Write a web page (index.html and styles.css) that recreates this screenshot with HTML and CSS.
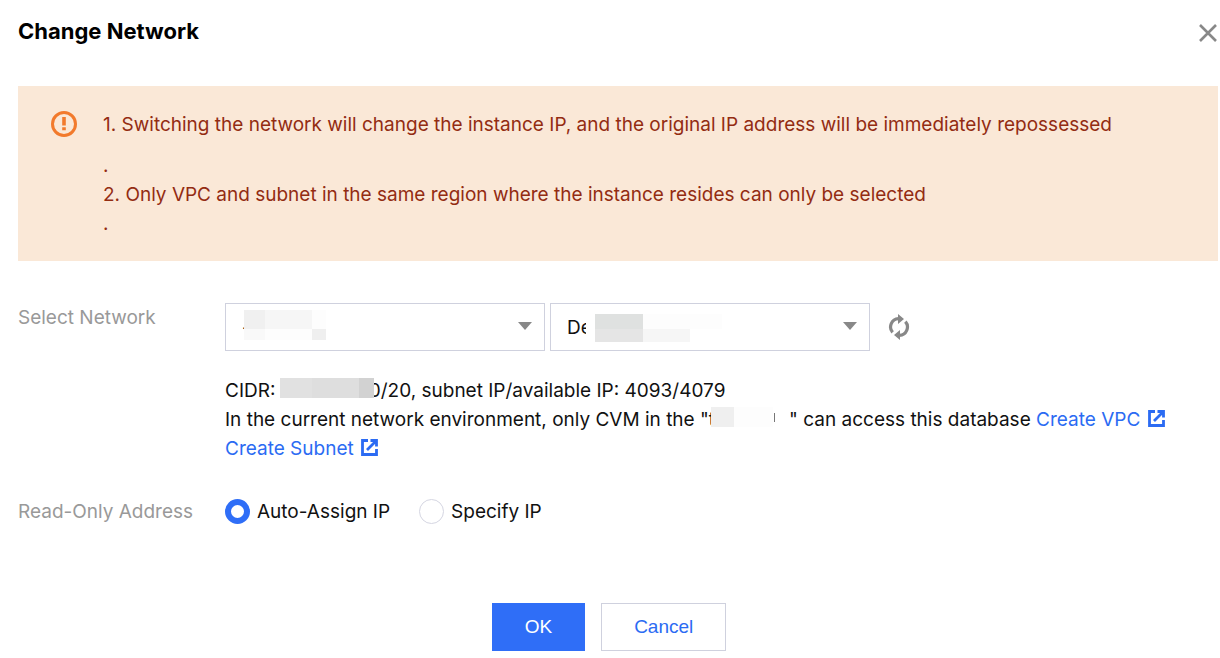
FILE: index.html
```html
<!DOCTYPE html>
<html lang="en">
<head>
    <meta charset="UTF-8">
    <meta name="viewport" content="width=device-width, initial-scale=1.0">
    <title>Change Network</title>
    <link rel="stylesheet" href="styles.css">
</head>
<body>
    <div class="dialog">
        <div class="dialog-header">
            <h2>Change Network</h2>
            <button type="button" class="icon-btn close-btn" aria-label="Close">
                <svg width="20" height="20" viewBox="0 0 20 20"><path d="M2 2l16 16M18 2L2 18" fill="none" stroke="#888" stroke-width="2.6"/></svg>
            </button>
        </div>

        <div class="alert">
            <svg class="alert-icon" width="26" height="26" viewBox="0 0 26 26">
                <circle cx="13" cy="13" r="11.5" fill="none" stroke="#f27a2c" stroke-width="3"/>
                <path d="M11.2 6h3.6v8.6h-3.6zM11.2 16.2h3.6v3h-3.6z" fill="#f27a2c"/>
            </svg>
            <div class="alert-text">
                <p>1. Switching the network will change the instance IP, and the original IP address will be immediately repossessed</p>
                <div>.</div>
                <div>2. Only VPC and subnet in the same region where the instance resides can only be selected</div>
                <div>.</div>
            </div>
        </div>

        <form>
            <div class="form-row">
                <label class="form-label" for="vpc">Select Network</label>
                <div class="form-content">
                    <div class="select-group">
                        <div class="select-box">
                            <select id="vpc"><option>-</option></select>
                            <span class="mask mask-vpc"></span>
                        </div>
                        <div class="select-box">
                            <select id="subnet" aria-label="Subnet"><option>De</option></select>
                            <span class="mask mask-subnet"></span>
                        </div>
                        <button type="button" class="icon-btn refresh-btn" aria-label="Refresh">
                            <svg width="22" height="26" viewBox="0 0 22 26">
                                <path d="M4.6 18.4A8.3 8.3 0 0 1 10.5 4.7M17.4 7.6A8.3 8.3 0 0 1 11.5 21.3" fill="none" stroke="#888" stroke-width="3.2"/>
                                <path d="M10 0l6 5-6 5zM12 16l-6 5 6 5z" fill="#888"/>
                            </svg>
                        </button>
                    </div>
                    <div class="network-info">
                        <div>CIDR: <span class="mask-inline mask-cidr"></span>0/20, subnet IP/available IP: 4093/4079</div>
                        <div>
                            In the current network environment, only CVM in the "t<span class="mask-inline mask-name"></span>" can access this database
                            <a href="#">Create VPC <svg class="link-icon" width="17" height="17" viewBox="0 0 17 17"><path d="M7 1.5H1.5v14h14V10M9.5 1.5h6v6M15 2L6 11" fill="none" stroke="currentColor" stroke-width="2.8"/></svg></a>
                            <a href="#">Create Subnet <svg class="link-icon" width="17" height="17" viewBox="0 0 17 17"><path d="M7 1.5H1.5v14h14V10M9.5 1.5h6v6M15 2L6 11" fill="none" stroke="currentColor" stroke-width="2.8"/></svg></a>
                        </div>
                    </div>
                </div>
            </div>

            <div class="form-row address-row">
                <span class="form-label" id="addressLabel">Read-Only Address</span>
                <div class="form-content radio-group" role="radiogroup" aria-labelledby="addressLabel">
                    <label><input type="radio" name="address" checked>Auto-Assign IP</label>
                    <label><input type="radio" name="address">Specify IP</label>
                </div>
            </div>

            <div class="dialog-footer">
                <button type="button" class="btn btn-primary">OK</button>
                <button type="button" class="btn">Cancel</button>
            </div>
        </form>
    </div>
</body>
</html>
```
FILE: styles.css
```css
* {
    box-sizing: border-box;
}
body {
    margin: 0;
    background: #fff;
    color: #111;
    font-family: Inter, "Liberation Sans", sans-serif;
    font-size: 19px;
    line-height: 29px;
}
.dialog {
    padding: 16px 2px 7px 18px;
}
.dialog-header {
    display: flex;
    justify-content: space-between;
    align-items: center;
    margin-bottom: 40px;
}
h2 {
    margin: 0;
    color: #000;
    font-size: 22px;
    font-weight: 700;
    line-height: 30px;
}
.icon-btn {
    display: flex;
    padding: 0;
    border: 0;
    background: none;
    cursor: pointer;
}
.close-btn {
    margin-top: 4px;
}

/* warning box */
.alert {
    display: flex;
    gap: 26px;
    padding: 24px 32px 23px 33px;
    background: #fae8d7;
    color: #932c12;
}
.alert-icon {
    flex: none;
    margin-top: 1px;
}
.alert-text p {
    margin: 0 0 12px;
}

/* form */
.form-row {
    display: flex;
    margin-top: 42px;
}
.address-row {
    margin-top: 34px;
}
.form-label {
    flex: none;
    width: 207px;
    color: #999;
}
.form-content {
    flex: 1;
    min-width: 0;
}
.select-group {
    display: flex;
    align-items: center;
    gap: 5px;
}
.select-box {
    position: relative;
    flex: 0 1 320px;
}
select {
    display: block;
    width: 100%;
    height: 48px;
    padding: 0 40px 0 16px;
    border: 1px solid #cfd1de;
    border-radius: 0;
    background: #fff;
    color: #111;
    font: inherit;
    appearance: none;
}
.select-box::after {
    content: "";
    position: absolute;
    top: 19px;
    right: 13px;
    border: 7px solid transparent;
    border-top: 8px solid #888;
    border-bottom: 0;
    pointer-events: none;
}
.refresh-btn {
    margin-left: 13px;
}

/* hidden values */
.mask {
    position: absolute;
    pointer-events: none;
}
.mask-vpc {
    top: 7px;
    left: 19px;
    width: 82px;
    height: 30px;
    background:
        linear-gradient(#f0f0f0, #f0f0f0) 0 0 / 21px 19px no-repeat,
        linear-gradient(#f6f6f6, #f6f6f6) 21px 0 / 47px 19px no-repeat,
        linear-gradient(#f9f9f9, #f9f9f9) 0 19px / 21px 11px no-repeat,
        linear-gradient(#efefef, #efefef) 68px 19px / 14px 11px no-repeat,
        #fdfdfd;
}
.mask-subnet {
    top: 11px;
    left: 36px;
    width: 136px;
    height: 28px;
    background:
        linear-gradient(#dfe1e0, #dfe1e0) 9px 0 / 48px 15px no-repeat,
        linear-gradient(#e5e5e5, #e5e5e5) 9px 15px / 48px 13px no-repeat,
        linear-gradient(#fdfdfd, #fdfdfd) 57px 0 / 79px 15px no-repeat,
        linear-gradient(#f6f6f6, #f6f6f6) 57px 15px / 47px 13px no-repeat,
        #fff;
}
.mask-inline {
    position: relative;
    display: inline-block;
    height: 20px;
    vertical-align: -1px;
}
.mask-cidr {
    width: 94px;
    margin-left: -1px;
    margin-right: -5px;
    background: linear-gradient(90deg, #e1e1e1 32px, #dedede 32px 79px, #d2d2d2 79px);
}
.mask-name {
    width: 78px;
    margin-left: -4px;
    background:
        linear-gradient(#777, #777) 63px 6px / 1px 9px no-repeat,
        linear-gradient(90deg, #efefef 23px, #fdfdfd 23px 62px, #fff 62px);
}

.network-info {
    margin-top: 25px;
}
a {
    color: #2b6bf3;
    text-decoration: none;
    white-space: nowrap;
}
.link-icon {
    margin-left: 2px;
    vertical-align: -1px;
}

.radio-group {
    display: flex;
    gap: 29px;
}
.radio-group label {
    display: flex;
    align-items: center;
    gap: 7px;
}
input[type="radio"] {
    width: 25px;
    height: 25px;
    margin: 0;
    border: 1px solid #d5d6e2;
    border-radius: 50%;
    background: #fff;
    appearance: none;
}
input[type="radio"]:checked {
    border: 6px solid #2f6ef7;
}

.dialog-footer {
    display: flex;
    justify-content: center;
    gap: 16px;
    margin-top: 77px;
    padding-right: 18px;
}
.btn {
    height: 48px;
    padding: 0 32px;
    border: 1px solid #cfd1de;
    background: #fff;
    color: #2b6bf3;
    font-family: "Liberation Sans", Arial, sans-serif;
    font-size: 19px;
    cursor: pointer;
}
.btn-primary {
    border-color: #2f6ef7;
    background: #2f6ef7;
    color: #fff;
}
```
